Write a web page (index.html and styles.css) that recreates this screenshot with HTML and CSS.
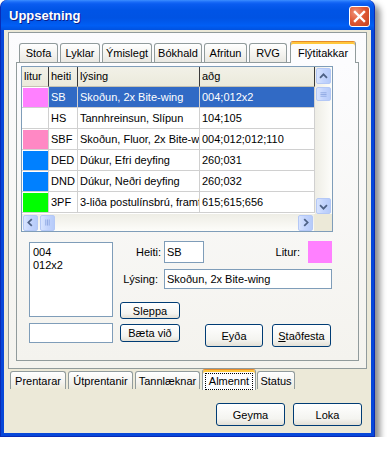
FILE: index.html
```html
<!DOCTYPE html>
<html lang="is">
<head>
    <meta charset="UTF-8">
    <title>Uppsetning</title>
    <link rel="stylesheet" href="styles.css">
</head>
<body>
    <div class="window">
        <div class="titlebar">
            <span class="title">Uppsetning</span>
            <span class="close-btn">
                <svg width="19" height="19" viewBox="0 0 19 19">
                    <path d="M5 5 L14 14 M14 5 L5 14" stroke="#fff" stroke-width="2.4" stroke-linecap="square"/>
                </svg>
            </span>
        </div>

        <div class="client">
            <div class="outer-panel">
                <div class="tabs top-tabs">
                    <span class="tab t-stofa">Stofa</span>
                    <span class="tab t-lyklar">Lyklar</span>
                    <span class="tab t-ymislegt">Ýmislegt</span>
                    <span class="tab t-bokhald">Bókhald</span>
                    <span class="tab t-afritun">Afritun</span>
                    <span class="tab t-rvg">RVG</span>
                    <span class="tab active t-flyti">Flýtitakkar</span>
                </div>

                <div class="inner-panel">
                    <div class="listview">
                        <div class="lv-main">
                            <div class="lv-table">
                                <div class="hd">litur</div>
                                <div class="hd">heiti</div>
                                <div class="hd">lýsing</div>
                                <div class="hd">aðg</div>

                                <div class="cell color"><span class="sw c-pink"></span></div>
                                <div class="cell sel">SB</div>
                                <div class="cell sel">Skoðun, 2x Bite-wing</div>
                                <div class="cell sel">004;012x2</div>

                                <div class="cell color"><span class="sw c-white"></span></div>
                                <div class="cell">HS</div>
                                <div class="cell">Tannhreinsun, Slípun</div>
                                <div class="cell">104;105</div>

                                <div class="cell color"><span class="sw c-rose"></span></div>
                                <div class="cell">SBF</div>
                                <div class="cell">Skoðun, Fluor, 2x Bite-wing</div>
                                <div class="cell">004;012;012;110</div>

                                <div class="cell color"><span class="sw c-blue"></span></div>
                                <div class="cell">DED</div>
                                <div class="cell">Dúkur, Efri deyfing</div>
                                <div class="cell">260;031</div>

                                <div class="cell color"><span class="sw c-blue"></span></div>
                                <div class="cell">DND</div>
                                <div class="cell">Dúkur, Neðri deyfing</div>
                                <div class="cell">260;032</div>

                                <div class="cell color"><span class="sw c-green"></span></div>
                                <div class="cell">3PF</div>
                                <div class="cell">3-liða postulínsbrú, framtönn</div>
                                <div class="cell">615;615;656</div>
                            </div>

                            <div class="vscroll">
                                <span class="sbtn">
                                    <svg width="15" height="15" viewBox="0 0 15 15"><path d="M3.5 9 L7.5 5 L11.5 9" fill="none" stroke="#4D6185" stroke-width="2"/></svg>
                                </span>
                                <span class="sbtn thumb-v">
                                    <svg width="15" height="11" viewBox="0 0 15 11"><path d="M4 3.5 H11 M4 5.5 H11 M4 7.5 H11" stroke="#8CA6E0" stroke-width="1"/></svg>
                                </span>
                                <span class="vtrack"></span>
                                <span class="sbtn">
                                    <svg width="15" height="15" viewBox="0 0 15 15"><path d="M3.5 6 L7.5 10 L11.5 6" fill="none" stroke="#4D6185" stroke-width="2"/></svg>
                                </span>
                            </div>
                        </div>

                        <div class="hscroll">
                            <span class="sbtn hbtn">
                                <svg width="15" height="15" viewBox="0 0 15 15"><path d="M9 3.5 L5 7.5 L9 11.5" fill="none" stroke="#4D6185" stroke-width="2"/></svg>
                            </span>
                            <span class="sbtn thumb-h">
                                <svg width="15" height="15" viewBox="0 0 15 15"><path d="M5.5 4 V11 M7.5 4 V11 M9.5 4 V11" stroke="#8CA6E0" stroke-width="1"/></svg>
                            </span>
                            <span class="htrack"></span>
                            <span class="sbtn hbtn">
                                <svg width="15" height="15" viewBox="0 0 15 15"><path d="M6 3.5 L10 7.5 L6 11.5" fill="none" stroke="#4D6185" stroke-width="2"/></svg>
                            </span>
                            <span class="corner"></span>
                        </div>
                    </div>

                    <div class="form">
                        <div class="form-left">
                            <div class="listbox">004<br>012x2</div>
                            <div class="textbox tb-small"></div>
                        </div>
                        <div class="form-right">
                            <div class="frow">
                                <span class="lbl">Heiti:</span>
                                <span class="textbox tb-heiti">SB</span>
                                <span class="litur-lbl">Litur:</span>
                                <span class="swatch"></span>
                            </div>
                            <div class="frow row-lysing">
                                <span class="lbl lbl-lysing">Lýsing:</span>
                                <span class="textbox tb-lysing">Skoðun, 2x Bite-wing</span>
                            </div>
                            <div class="frow row-sleppa">
                                <button class="btn btn-small">Sleppa</button>
                            </div>
                            <div class="frow row-buttons">
                                <button class="btn btn-small btn-baeta">Bæta við</button>
                                <button class="btn btn-eyda">Eyða</button>
                                <button class="btn btn-stadfesta"><u>S</u>taðfesta</button>
                            </div>
                        </div>
                    </div>
                </div>
            </div>

            <div class="tabs bottom-tabs">
                <span class="btab b-prent">Prentarar</span>
                <span class="btab b-utprent">Útprentanir</span>
                <span class="btab b-tann">Tannlæknar</span>
                <span class="btab active b-almennt"><span class="focus">Almennt</span></span>
                <span class="btab b-status">Status</span>
            </div>

            <div class="actions">
                <button class="btn btn-big">Geyma</button>
                <button class="btn btn-big">Loka</button>
            </div>
        </div>
    </div>
</body>
</html>
```

FILE: styles.css
```css
* {
    margin: 0;
    padding: 0;
    box-sizing: border-box;
}

body {
    background-color: #ffffff;
    font-family: "Liberation Sans", Arial, sans-serif;
    font-size: 11px;
    color: #000;
}

.window {
    width: 375px;
    height: 437px;
    display: flex;
    flex-direction: column;
    background-color: #0747D9;
    border: 1px solid #0A2BB5;
    border-top: none;
    border-radius: 7px 7px 0 0;
    box-shadow: 5px 5px 6px rgba(0,0,0,0.45);
}

.titlebar {
    height: 30px;
    display: flex;
    align-items: flex-start;
    justify-content: space-between;
    padding: 5px 4px 0 7px;
    border-radius: 7px 7px 0 0;
    background: linear-gradient(to bottom, #3C8EFF 0, #1A6CF8 2px, #0A5CF0 4px, #0054E6 10px, #0053E3 60%, #005EF5 85%, #0052E0 100%);
}

.title {
    color: #fff;
    font-weight: bold;
    font-size: 13px;
    line-height: 22px;
    padding-left: 1px;
    text-shadow: 1px 1px 0 #0A1E8C;
}

.close-btn {
    width: 21px;
    height: 21px;
    margin-top: 1px;
    display: flex;
    align-items: center;
    justify-content: center;
    border: 1px solid #fff;
    border-radius: 3px;
    background: radial-gradient(circle at 30% 30%, #F0937A 0, #E05A36 45%, #C4401C 100%);
}

.client {
    flex: 1;
    margin: 0 3px 3px;
    background-color: #ECE9D8;
    padding: 2px 4px 0;
    display: flex;
    flex-direction: column;
}

/* ytri flipaspjald */
.outer-panel {
    width: 359px;
    height: 337px;
    border: 1px solid #919B9C;
    background: linear-gradient(to bottom, #FCFCFE, #F4F3EE);
    padding: 8px 7px 7px;
}

.tabs {
    display: flex;
}

.top-tabs {
    height: 21px;
    align-items: flex-end;
    padding-left: 3px;
    gap: 2px;
}

.tab {
    height: 19px;
    display: flex;
    align-items: center;
    justify-content: center;
    border: 1px solid #919B9C;
    border-bottom: none;
    border-radius: 3px 3px 0 0;
    background: linear-gradient(to bottom, #FFFFFF, #F3F2EE 60%, #E9E8E2);
}

.tab.active {
    height: 22px;
    margin-bottom: -1px;
    margin-left: 1px;
    position: relative;
    z-index: 1;
    background: #FCFCFE;
    border-top: 1px solid #E68B2C;
    box-shadow: inset 0 2px 0 #FFC73C;
    padding-top: 1px;
}

.t-stofa { width: 39px; }
.t-lyklar { width: 40px; }
.t-ymislegt { width: 50px; }
.t-bokhald { width: 48px; }
.t-afritun { width: 43px; }
.t-rvg { width: 38px; }
.t-flyti { width: 66px; }

.inner-panel {
    height: 299px;
    border: 1px solid #919B9C;
    background: linear-gradient(to bottom, #FCFCFE, #F4F3EE);
    padding: 3px 4px;
}

/* listi */
.listview {
    width: 312px;
    height: 166px;
    border: 1px solid #7F9DB9;
    background: #fff;
    display: flex;
    flex-direction: column;
}

.lv-main {
    display: flex;
    height: 147px;
}

.lv-table {
    flex: 1;
    display: grid;
    grid-template-columns: 27px 29px 122px 1fr;
    grid-template-rows: 20px;
    grid-auto-rows: 21px;
    overflow: hidden;
}

.hd {
    background: linear-gradient(to bottom, #F2F1E8, #EBEADB);
    border-right: 1px solid #3A3A3A;
    border-bottom: 1px solid #C5C2B2;
    padding-left: 2px;
    line-height: 19px;
    white-space: nowrap;
}

.cell {
    border-right: 1px solid #D0D0D0;
    border-bottom: 1px solid #D0D0D0;
    padding-left: 2px;
    line-height: 20px;
    white-space: nowrap;
    overflow: hidden;
}

.cell.sel {
    background-color: #316AC5;
    color: #fff;
}

.cell.color {
    padding: 1px 0 0 1px;
}

.sw {
    display: block;
    width: 25px;
    height: 19px;
}

.c-pink { background: #FF80FF; }
.c-white { background: #FFFFFF; }
.c-rose { background: #FF88C4; }
.c-blue { background: #0080FF; }
.c-green { background: #00FF00; }

.vscroll {
    width: 17px;
    display: flex;
    flex-direction: column;
    background: linear-gradient(to right, #EEEDE5, #FDFDFA);
    padding: 1px 0 0 1px;
}

.sbtn {
    width: 15px;
    height: 16px;
    display: flex;
    align-items: center;
    justify-content: center;
    border: 1px solid #B4C8F6;
    border-radius: 2px;
    background: linear-gradient(to right, #D8E4FE, #C3D4FD 50%, #B6CBF9);
}

.thumb-v {
    height: 14px;
    margin-top: 3px;
}

.vtrack {
    flex: 1;
}

.hscroll {
    flex: 1;
    display: flex;
    align-items: center;
    background: linear-gradient(to bottom, #EEEDE5, #FDFDFA);
    padding-left: 1px;
}

.hbtn {
    width: 15px;
    height: 16px;
}

.thumb-h {
    width: 15px;
    margin-left: 2px;
}

.htrack {
    flex: 1;
}

.corner {
    width: 18px;
    align-self: stretch;
    background: #ECE9D8;
    margin-left: 1px;
}

/* inntak */
.form {
    display: flex;
    gap: 7px;
    margin-top: 10px;
    padding-left: 8px;
}

.form-left {
    width: 84px;
    display: flex;
    flex-direction: column;
    gap: 6px;
}

.listbox {
    height: 75px;
    border: 1px solid #7F9DB9;
    background: #fff;
    padding: 3px 3px;
    line-height: 13px;
}

.textbox {
    display: flex;
    align-items: center;
    border: 1px solid #7F9DB9;
    background: #fff;
    padding-left: 2px;
    white-space: nowrap;
}

.tb-small {
    height: 20px;
}

.form-right {
    width: 212px;
    margin-top: -1px;
    display: flex;
    flex-direction: column;
}

.frow {
    display: flex;
    align-items: center;
}

.lbl {
    width: 41px;
    margin-right: 3px;
    text-align: right;
}

.lbl-lysing {
    padding-right: 3px;
}

.tb-heiti {
    width: 40px;
    height: 22px;
}

.litur-lbl {
    margin-left: auto;
    margin-right: 8px;
}

.swatch {
    width: 24px;
    height: 22px;
    background: #FF80FF;
}

.row-lysing {
    margin-top: 6px;
}

.tb-lysing {
    width: 168px;
    height: 20px;
}

.row-sleppa {
    margin-top: 13px;
}

.row-buttons {
    margin-top: 5px;
    align-items: flex-start;
}

.btn {
    font-family: "Liberation Sans", Arial, sans-serif;
    font-size: 11px;
    color: #000;
    border: 1px solid #003C74;
    border-radius: 3px;
    background: linear-gradient(to bottom, #FFFFFF, #F4F4F0 70%, #E3E0D6);
    display: flex;
    align-items: center;
    justify-content: center;
}

.btn-small {
    width: 60px;
    height: 17px;
}

.btn-baeta {
    height: 18px;
}

.btn-eyda {
    width: 58px;
    height: 23px;
    margin-left: 25px;
}

.btn-stadfesta {
    width: 59px;
    height: 23px;
    margin-left: 9px;
}

/* neðri flipar */
.bottom-tabs {
    align-items: flex-start;
    padding-left: 2px;
    gap: 2px;
    height: 21px;
}

.btab {
    height: 18px;
    margin-top: 2px;
    display: flex;
    align-items: center;
    justify-content: center;
    border: 1px solid #919B9C;
    border-bottom: none;
    border-radius: 3px 3px 0 0;
    background: linear-gradient(to bottom, #FFFFFF, #F3F2EE 60%, #ECE9D8);
}

.btab.active {
    height: 21px;
    margin-top: 0;
    background: #FCFCFE;
    border-top: 1px solid #E68B2C;
    box-shadow: inset 0 2px 0 #FFC73C;
    padding-top: 3px;
}

.focus {
    outline: 1px dotted #000;
    padding: 0 3px;
    line-height: 15px;
}

.b-prent { width: 56px; }
.b-utprent { width: 65px; }
.b-tann { width: 65px; }
.b-almennt { width: 54px; }
.b-status { width: 38px; margin-left: -1px; }

.actions {
    display: flex;
    justify-content: flex-end;
    gap: 8px;
    margin-top: 13px;
    padding-right: 5px;
}

.btn-big {
    width: 69px;
    height: 23px;
}
```
